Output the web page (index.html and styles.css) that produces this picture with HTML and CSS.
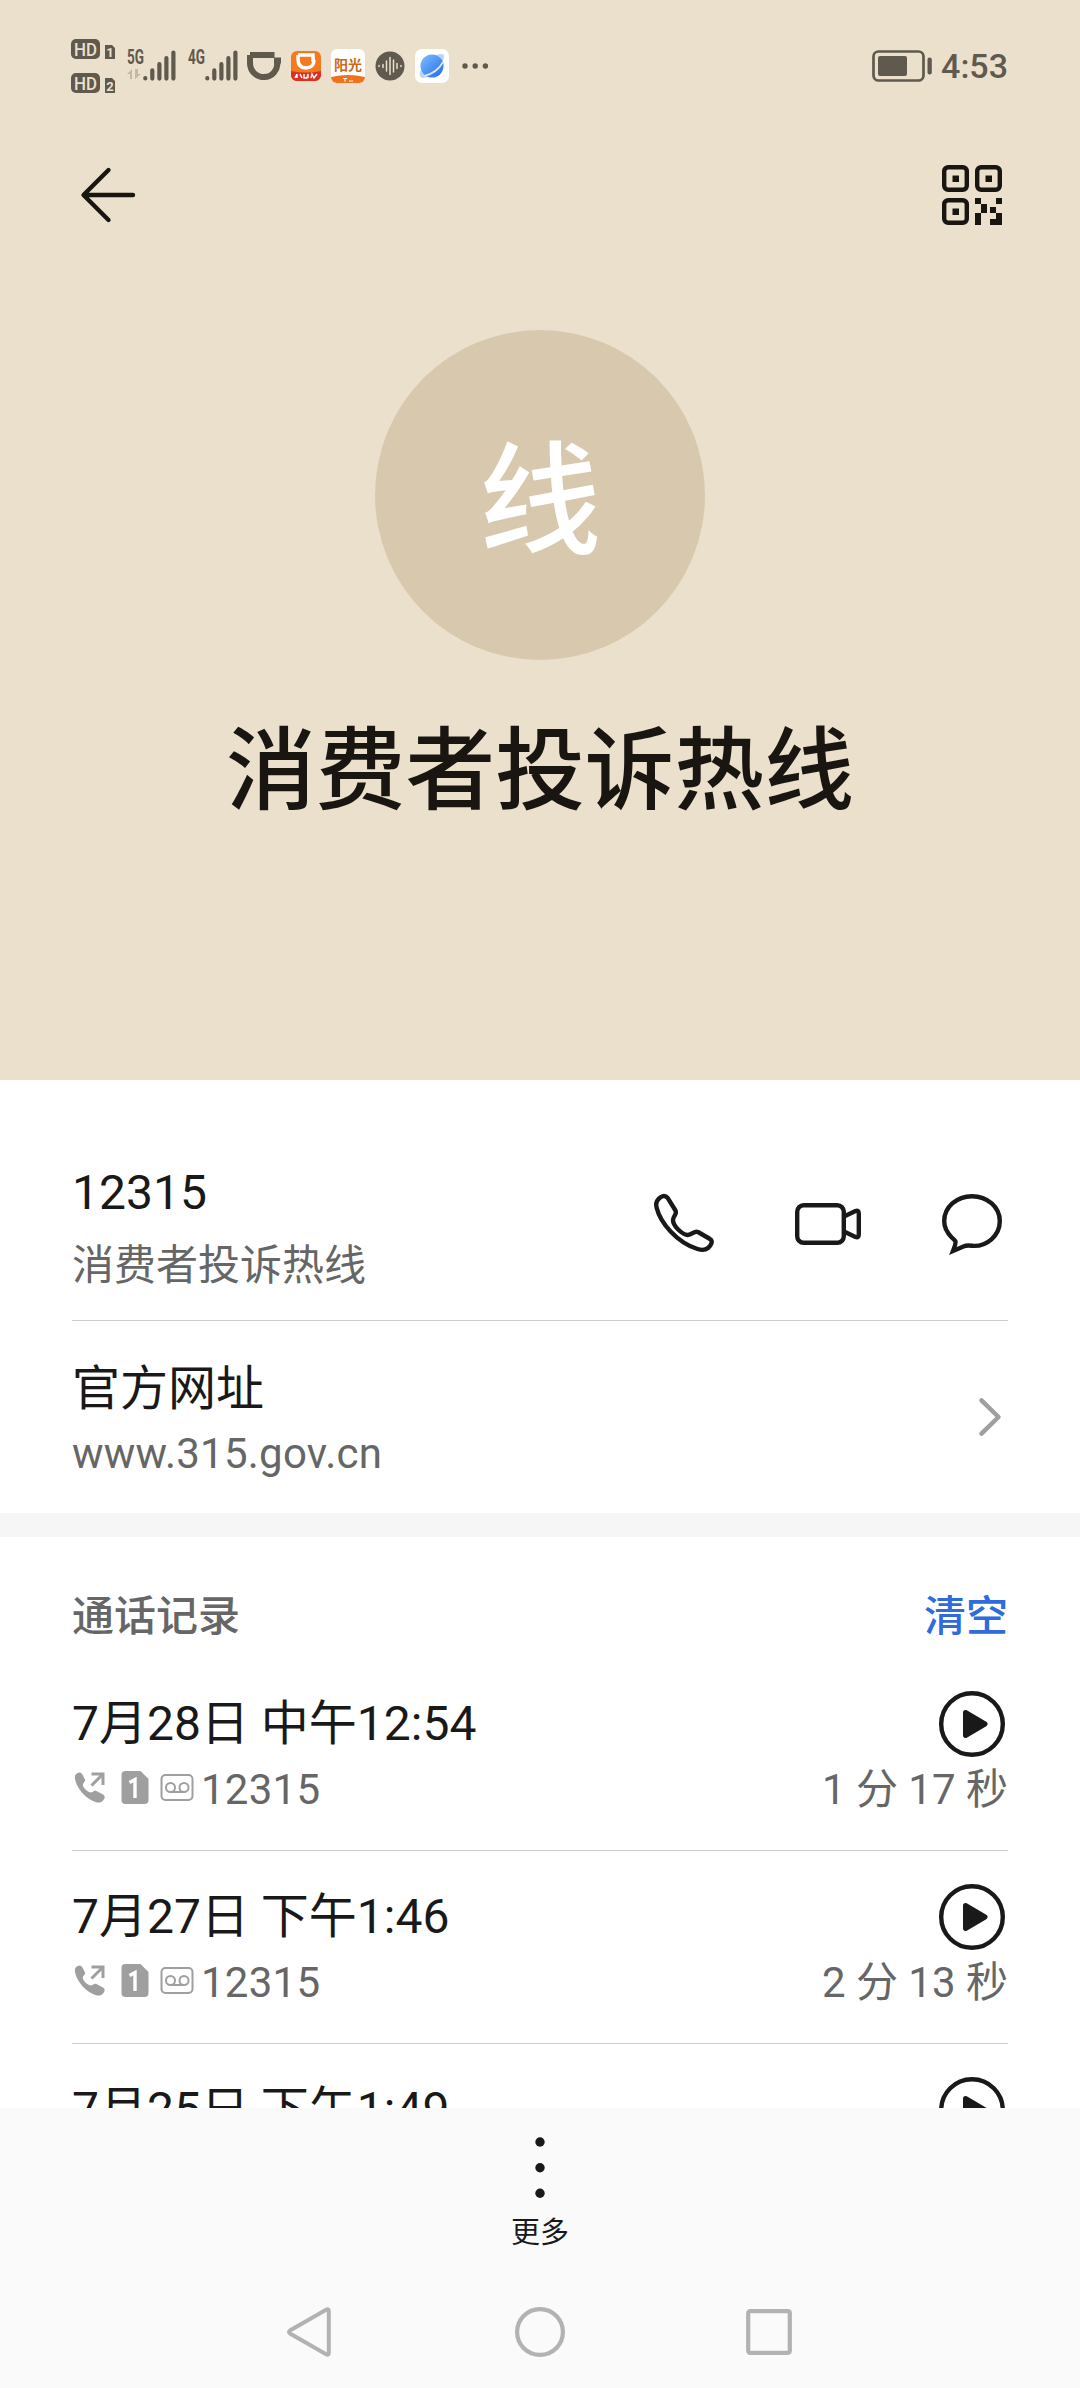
FILE: index.html
```html
<!DOCTYPE html>
<html lang="zh-CN">
<head>
    <meta charset="UTF-8">
    <meta name="viewport" content="width=device-width, initial-scale=1.0">
    <title>消费者投诉热线</title>
    <link rel="stylesheet" href="styles.css">
</head>
<body>
    <!-- shared icons -->
    <svg class="sprite" aria-hidden="true">
        <symbol id="signal" viewBox="0 0 34 32">
            <g stroke="#5f594e" stroke-width="4.2" stroke-linecap="round">
                <path d="M2.3 28.4v-.4M9.3 28.6v-8.2M16.4 28.6v-14.4M23.4 28.6V8M30.4 28.6V2.6"/>
            </g>
        </symbol>
        <symbol id="play" viewBox="0 0 72 72">
            <circle cx="36" cy="36" r="30.8" fill="none" stroke="#191919" stroke-width="4.4"/>
            <path d="M29.5 24.5L49 36L29.5 47.5Z" fill="#191919" stroke="#191919" stroke-width="5" stroke-linejoin="round"/>
        </symbol>
        <symbol id="call-info" viewBox="0 0 128 40">
            <g fill="#9f9f9f">
                <path d="M5.5 3C8 1.8 9.4 2.6 10.4 4.6L13 9.5C13.8 11.3 10.5 13.4 10.8 15.3C11.5 18.3 15.5 22 18.5 22.4C20.6 22.5 21.8 20 24 20.8L31 24.5C33 25.8 33.2 27.6 31.8 29.5C29.6 32.7 27 33 24 32.2C14.5 29.5 4.5 18.5 3 9C2.5 6 3.4 4 5.5 3Z"/>
                <path d="M53.5 1h15L76.5 9v21a4 4 0 0 1-4 4h-19a4 4 0 0 1-4-4V5a4 4 0 0 1 4-4z"/>
            </g>
            <path d="M19.5 4H31V15M31 4L19.5 15.5" fill="none" stroke="#9f9f9f" stroke-width="3"/>
            <path d="M57.5 12.5L63 9.5V28" fill="none" stroke="#fff" stroke-width="3.4"/>
            <g fill="none" stroke="#9f9f9f" stroke-width="2">
                <rect x="89.5" y="5" width="31" height="25" rx="4"/>
                <circle cx="98.5" cy="17.5" r="4.5"/>
                <circle cx="112" cy="17.5" r="4.5"/>
                <path d="M98.500 22h13.500"/>
            </g>
        </symbol>
    </svg>

    <div class="phone">
        <header class="profile">
            <div class="status-bar">
                <div class="status-left">
                    <svg class="hd" viewBox="0 0 46 56">
                        <rect x="0" y="1" width="29" height="20" rx="5" fill="#5f594e"/>
                        <rect x="0" y="35" width="29" height="20" rx="5" fill="#5f594e"/>
                        <path d="M34 7h7l3 3v11h-10v-14zM34 40h7l3 3v12h-10v-15z" fill="#5f594e"/>
                        <text x="3" y="17.5" class="hd-text" textLength="23" lengthAdjust="spacingAndGlyphs">HD</text>
                        <text x="3" y="51.5" class="hd-text" textLength="23" lengthAdjust="spacingAndGlyphs">HD</text>
                        <text x="39" y="19" class="sim-text">1</text>
                        <text x="39" y="53" class="sim-text">2</text>
                    </svg>
                    <svg class="net" viewBox="0 0 20 34">
                        <text x="0" y="15" textLength="17" lengthAdjust="spacingAndGlyphs" class="net-text">5G</text>
                        <path d="M0 25l5-5v10H3v-5zM8 20v10l6-5h-3v-5z" fill="#c2b8a5"/>
                    </svg>
                    <svg class="signal"><use href="#signal"/></svg>
                    <svg class="net second" viewBox="0 0 20 34">
                        <text x="0" y="15" textLength="17" lengthAdjust="spacingAndGlyphs" class="net-text">4G</text>
                    </svg>
                    <svg class="signal"><use href="#signal"/></svg>
                    <svg class="didi" viewBox="0 0 34 28">
                        <path d="M3 3H27.5M3 3V11C3 19 9 25 17 25C25.500 25 31 18 30.500 8.500M27 8.500h7" fill="none" stroke="#5f594e" stroke-width="6"/>
                    </svg>
                    <svg class="app-didi" viewBox="0 0 30 30">
                        <rect width="30" height="30" rx="6" fill="#f47a22"/>
                        <path d="M7 4H22V9H24M7 4V8C7 14 10 17 15 17C20 17 23 14 23 9" fill="none" stroke="#fff" stroke-width="3.5"/>
                        <path d="M0 20Q15 23 30 20V24a6 6 0 0 1-6 6H6a6 6 0 0 1-6-6z" fill="#db3021"/>
                        <path d="M4 27l2-4v4M9 23l2 4M13 23v4h3l1-4v4M20 27l1-4 2 4 3-4" fill="none" stroke="#fff" stroke-width="1.4"/>
                    </svg>
                    <svg class="app-sun" viewBox="0 0 34 34">
                        <rect width="34" height="34" rx="6" fill="#fff"/>
                        <path d="M0 28Q17 24 34 28a6 6 0 0 1-6 6H6a6 6 0 0 1-6-6z" fill="#f0731c"/>
                        <text x="17" y="20.5" class="sun-text">阳光</text>
                        <path d="M12 29.5h4M14 29.5v3M18 32h4" stroke="#fff" stroke-width="1.2"/>
                    </svg>
                    <svg class="app-wave" viewBox="0 0 30 30">
                        <circle cx="15" cy="15" r="14.5" fill="#5f594e"/>
                        <path d="M4 14.5v1M8 13.5v3M11.500 10v10M15 6.500v17M18.500 9v12M22 12.500v5M26 14.500v1" stroke="#ebe0cc" stroke-width="1.5" stroke-linecap="round"/>
                    </svg>
                    <svg class="app-globe" viewBox="0 0 34 34">
                        <defs>
                            <linearGradient id="globe" x1="0" y1="0" x2="1" y2="1">
                                <stop offset="0" stop-color="#7dc0ff"/>
                                <stop offset="1" stop-color="#2468e8"/>
                            </linearGradient>
                        </defs>
                        <rect width="34" height="34" rx="7" fill="#fff"/>
                        <path d="M21 6Q30 3 29 8Q29 11 26 15zM6 20Q3 27 7 29Q10 29 14 27z" fill="#bcd4fb"/>
                        <circle cx="17" cy="17" r="11.5" fill="url(#globe)"/>
                        <path d="M28 13Q22 24 9 27" fill="none" stroke="#dceaff" stroke-width="1.6"/>
                    </svg>
                    <svg class="dots" viewBox="0 0 28 8">
                        <g fill="#5f594e"><circle cx="3" cy="4" r="2.7"/><circle cx="13.200" cy="4" r="2.7"/><circle cx="23.400" cy="4" r="2.7"/></g>
                    </svg>
                </div>
                <div class="status-right">
                    <svg class="battery" viewBox="0 0 60 32">
                        <rect x="1.5" y="1.5" width="50" height="29" rx="5" fill="none" stroke="#5f594e" stroke-width="2.7"/>
                        <rect x="6" y="6" width="29" height="20" rx="2" fill="#5f594e"/>
                        <rect x="55.5" y="7.5" width="4.3" height="17" rx="2" fill="#5f594e"/>
                    </svg>
                    <span class="clock">4:53</span>
                </div>
            </div>

            <div class="toolbar">
                <svg class="icon" viewBox="0 0 72 72">
                    <path d="M36.5 11L11.5 36L36.5 61M12 36H61" fill="none" stroke="#191611" stroke-width="4.4" stroke-linecap="round" stroke-linejoin="round"/>
                </svg>
                <svg class="icon" viewBox="0 0 72 72">
                    <g fill="none" stroke="#191611" stroke-width="4.4">
                        <rect x="8.2" y="8.2" width="22.6" height="22.6" rx="4"/>
                        <rect x="41.2" y="8.2" width="22.6" height="22.6" rx="4"/>
                        <rect x="8.2" y="41.2" width="22.6" height="22.6" rx="4"/>
                    </g>
                    <path d="M16.5 16.5h6.5v6.5h-6.5zM49.5 16.5h6.5v6.5h-6.5zM16.5 49.5h6.5v6.5h-6.5zM39 39h6v6h-6zM45 45h6v9h-6zM39 54h6v12h-6zM60 39h6v6h-6zM54 48h6v6h-6zM60 54h6v12h-12v-6h6z" fill="#191611"/>
                </svg>
            </div>

            <div class="avatar"><span>线</span></div>
            <h1>消费者投诉热线</h1>
        </header>

        <main>
            <section class="contact">
                <div class="row number-row">
                    <div class="row-text">
                        <p class="primary">12315</p>
                        <p class="secondary">消费者投诉热线</p>
                    </div>
                    <div class="actions">
                        <svg class="icon" viewBox="0 0 72 72">
                            <path d="M10.5 11C13 8 17 6.5 19.8 10.2L27.5 22.5C29.5 26 25 28 25 32C25 38 34 46.5 39.5 47C44 47.2 46 42.5 50 44L62 51C65.5 53.2 63 57.5 60 60C57 62.5 54 62.5 49.5 61C29 54.5 12.5 35 8.7 20C7.5 16 8.5 13.2 10.5 11Z" fill="none" stroke="#191919" stroke-width="4.4" stroke-linejoin="round"/>
                        </svg>
                        <svg class="icon" viewBox="0 0 72 72">
                            <rect x="5.2" y="17.2" width="46.6" height="37.6" rx="6.5" fill="none" stroke="#191919" stroke-width="4.4"/>
                            <path d="M52 28.5L63.5 23Q66.8 22 66.8 25.5V46.5Q66.8 50 63.5 49L52 43.5" fill="none" stroke="#191919" stroke-width="4.4" stroke-linejoin="round"/>
                        </svg>
                        <svg class="icon" viewBox="0 0 72 72">
                            <path d="M36 8.2C51.5 8.2 63.8 19.3 63.8 33C63.8 48 50.5 58.5 37 57.8C33 57.4 30.5 57 28 58.2L17 63Q20 55 19.5 53.5C19 52 17.5 51.2 15.5 49.2C11 44.5 8.2 39.5 8.2 33C8.2 19.3 20.5 8.2 36 8.2Z" fill="none" stroke="#191919" stroke-width="4.4"/>
                        </svg>
                    </div>
                </div>
                <div class="row site-row">
                    <div class="row-text">
                        <p class="primary">官方网址</p>
                        <p class="secondary">www.315.gov.cn</p>
                    </div>
                    <svg class="chevron" viewBox="0 0 36 48">
                        <path d="M9.5 7.3L26.5 24L9.5 40.7" fill="none" stroke="#9f9f9f" stroke-width="4.5" stroke-linecap="round" stroke-linejoin="round"/>
                    </svg>
                </div>
            </section>

            <section class="calls">
                <div class="calls-head">
                    <h2>通话记录</h2>
                    <a class="clear">清空</a>
                </div>
                <div class="call">
                    <div class="call-line">
                        <p class="primary">7月28日 中午12:54</p>
                        <svg class="icon"><use href="#play"/></svg>
                    </div>
                    <div class="call-line meta">
                        <svg class="call-info"><use href="#call-info"/></svg>
                        <span>12315</span>
                        <span class="duration">1 分 17 秒</span>
                    </div>
                </div>
                <div class="call">
                    <div class="call-line">
                        <p class="primary">7月27日 下午1:46</p>
                        <svg class="icon"><use href="#play"/></svg>
                    </div>
                    <div class="call-line meta">
                        <svg class="call-info"><use href="#call-info"/></svg>
                        <span>12315</span>
                        <span class="duration">2 分 13 秒</span>
                    </div>
                </div>
                <div class="call">
                    <div class="call-line">
                        <p class="primary">7月25日 下午1:49</p>
                        <svg class="icon"><use href="#play"/></svg>
                    </div>
                </div>
            </section>
        </main>

        <footer>
            <div class="more">
                <svg class="more-dots" viewBox="0 0 12 64">
                    <g fill="#191919"><circle cx="6" cy="6" r="4.7"/><circle cx="6" cy="31.7" r="4.7"/><circle cx="6" cy="57.2" r="4.7"/></g>
                </svg>
                <span>更多</span>
            </div>
            <nav>
                <svg class="nav-icon" viewBox="0 0 56 56">
                    <path d="M43.5 5.5Q45.8 4.5 45.8 7V49Q45.8 51.500 43.5 50.500L7 29.500Q5 28 7 26.500Z" fill="none" stroke="#b2b2b2" stroke-width="4"/>
                </svg>
                <svg class="nav-icon" viewBox="0 0 56 56">
                    <circle cx="28" cy="28" r="22.9" fill="none" stroke="#b2b2b2" stroke-width="4.2"/>
                </svg>
                <svg class="nav-icon" viewBox="0 0 56 56">
                    <rect x="7.2" y="7.2" width="41.6" height="41.6" rx="2" fill="none" stroke="#b2b2b2" stroke-width="4.2"/>
                </svg>
            </nav>
        </footer>
    </div>
</body>
</html>
```
FILE: styles.css
```css
* {
    box-sizing: border-box;
    margin: 0;
    padding: 0;
}

body {
    font-family: Roboto, "Noto Sans CJK SC", sans-serif;
    color: #191919;
    background-color: #fff;
}

svg {
    display: block;
    flex-shrink: 0;
}

.sprite {
    position: absolute;
    width: 0;
    height: 0;
}

.phone {
    display: flex;
    flex-direction: column;
    width: 1080px;
    height: 2388px;
    overflow: hidden;
}

/* Header */
.profile {
    height: 1080px;
    flex-shrink: 0;
    background-color: #ebe0cc;
    color: #191611;
}

.status-bar {
    display: flex;
    justify-content: space-between;
    align-items: center;
    height: 132px;
    padding: 0 72px 0 71px;
}

.status-left,
.status-right {
    display: flex;
    align-items: center;
}

.hd {
    width: 46px;
    height: 56px;
    margin-right: 10px;
    overflow: visible;
}

.hd-text {
    font-size: 18.5px;
    font-weight: 500;
    fill: #ebe0cc;
}

.sim-text {
    font-size: 13px;
    font-weight: 700;
    text-anchor: middle;
    fill: #ebe0cc;
}

.net {
    width: 20px;
    height: 34px;
    margin-right: -4px;
    overflow: visible;
}

.net.second {
    margin-left: 11px;
    margin-right: -3px;
}

.net-text {
    font-size: 20px;
    font-weight: 700;
    fill: #5f594e;
}

.signal {
    width: 34px;
    height: 32px;
}

.didi {
    width: 34px;
    height: 28px;
    margin-left: 8px;
}

.app-didi {
    width: 30px;
    height: 30px;
    margin-left: 10px;
}

.app-sun {
    width: 34px;
    height: 34px;
    margin-left: 10px;
}

.sun-text {
    font-size: 14px;
    font-weight: 700;
    text-anchor: middle;
    fill: #c8691c;
}

.app-wave {
    width: 30px;
    height: 30px;
    margin-left: 10px;
}

.app-globe {
    width: 34px;
    height: 34px;
    margin-left: 10px;
}

.dots {
    width: 28px;
    height: 8px;
    margin-left: 13px;
}

.battery {
    width: 60px;
    height: 32px;
    margin-right: 9px;
}

.clock {
    font-size: 34px;
    font-weight: 500;
    line-height: 40px;
    color: #5f594e;
}

.toolbar {
    display: flex;
    justify-content: space-between;
    padding: 27px 72px 0;
}

.icon {
    width: 72px;
    height: 72px;
}

.avatar {
    display: flex;
    align-items: center;
    justify-content: center;
    width: 330px;
    height: 330px;
    margin: 99px auto 0;
    padding-top: 16px;
    border-radius: 50%;
    background-color: #d8c9ae;
    color: #fff;
    font-size: 122px;
    font-weight: 500;
    line-height: 180px;
}

h1 {
    margin-top: 46px;
    font-size: 89.7px;
    font-weight: 500;
    line-height: 132px;
    text-align: center;
}

/* Contact details */
main {
    height: 1028px;
    overflow: hidden;
}

.contact {
    padding: 0 72px;
    border-bottom: 24px solid #f6f6f6;
}

.row {
    display: flex;
    justify-content: space-between;
    align-items: center;
}

.number-row {
    height: 241px;
    padding-top: 48px;
    border-bottom: 1px solid #ccc;
}

.site-row {
    height: 192px;
}

.primary {
    font-size: 48px;
    line-height: 64px;
}

.secondary {
    font-size: 42px;
    line-height: 56px;
    color: #666;
}

.number-row .row-text {
    padding-top: 7px;
}

.number-row .secondary {
    margin-top: 13px;
}

.site-row .row-text {
    padding-top: 6px;
}

.site-row .secondary {
    margin-top: 5px;
    letter-spacing: 0.25px;
}

.site-row .primary {
    margin-top: -1px;
}

.actions {
    display: flex;
    gap: 72px;
}

.chevron {
    width: 36px;
    height: 48px;
}

/* Call history */
.calls {
    padding: 0 72px;
}

.calls-head {
    display: flex;
    justify-content: space-between;
    align-items: center;
    height: 121px;
    padding-top: 38px;
}

h2,
.clear {
    font-size: 42px;
    font-weight: 500;
    line-height: 60px;
}

h2 {
    color: #666;
}

.clear {
    color: #2f6bdc;
}

.call {
    height: 193px;
    padding-top: 30px;
    border-bottom: 1px solid #ccc;
}

.call-line {
    display: flex;
    justify-content: space-between;
    align-items: center;
    height: 72px;
}

.call-line.meta {
    height: 60px;
    font-size: 42px;
    line-height: 60px;
    letter-spacing: 0.25px;
    color: #666;
}

.call-info {
    width: 128px;
    height: 40px;
    margin-right: 1px;
}

.duration {
    margin-left: auto;
    letter-spacing: 0;
}

/* Bottom bar */
footer {
    height: 280px;
    background-color: #fafafa;
}

.more {
    display: flex;
    flex-direction: column;
    align-items: center;
    height: 168px;
    padding-top: 28px;
    font-size: 29px;
    line-height: 36px;
}

.more-dots {
    width: 12px;
    height: 64px;
    margin-bottom: 15px;
}

nav {
    display: flex;
    justify-content: center;
    align-items: center;
    gap: 173px;
    height: 112px;
}

.nav-icon {
    width: 56px;
    height: 56px;
}
```
